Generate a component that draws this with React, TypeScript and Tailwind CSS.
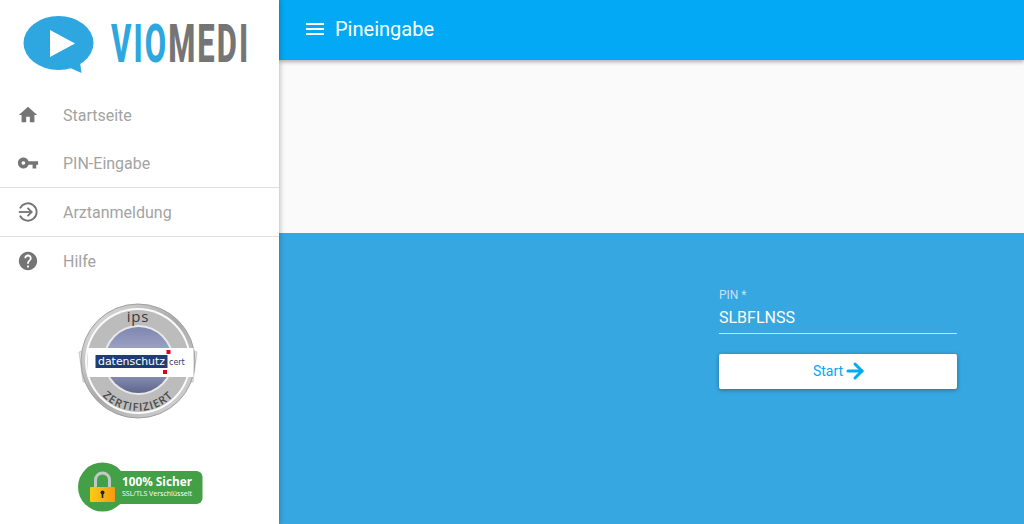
import React from 'react';
import { ArrowRight } from 'lucide-react';

const navTop = [
  {
    label: 'Startseite',
    icon: <path d="M10 20v-6h4v6h5v-8h3L12 3 2 12h3v8z" fill="currentColor" />,
  },
  {
    label: 'PIN-Eingabe',
    icon: (
      <path
        d="M12.65 10C11.83 7.67 9.61 6 7 6c-3.31 0-6 2.69-6 6s2.69 6 6 6c2.61 0 4.83-1.67 5.65-4H17v4h4v-4h2v-4H12.65zM7 14c-1.1 0-2-.9-2-2s.9-2 2-2 2 .9 2 2-.9 2-2 2z"
        fill="currentColor"
      />
    ),
  },
];

const NavItem: React.FC<{ label: string; icon: React.ReactNode }> = ({ label, icon }) => (
  <div className="flex h-12 items-center gap-6 pl-[17px]">
    <svg viewBox="0 0 24 24" className="h-[22px] w-[22px] text-[#757575]">
      {icon}
    </svg>
    <span className="mt-[2px] text-base text-[#a3a3a3]">{label}</span>
  </div>
);

const Logo = () => (
  <svg viewBox="0 0 279 91" className="h-[91px] w-[279px]">
    <ellipse cx="58.500" cy="43" rx="35" ry="27" fill="#2ea7e0" />
    <path d="M68 67L80 62L81.500 73z" fill="#2ea7e0" />
    <path d="M50 30l25 13.500L50 57z" fill="#fff" />
    <text transform="translate(111 62) scale(0.585 1)" fontSize="53" fontWeight="800" letterSpacing="3.500">
      <tspan fill="#2ea7e0">VIO</tspan>
      <tspan fill="#757575">MEDI</tspan>
    </text>
  </svg>
);

// ips datenschutz cert seal
const Seal = () => (
  <svg viewBox="0 0 124 118" className="h-[118px] w-[124px]">
    <defs>
      <linearGradient id="ring" x1="0" y1="0" x2="1" y2="1">
        <stop offset="0" stopColor="#e4e4e4" />
        <stop offset="0.5" stopColor="#a9a9a9" />
        <stop offset="1" stopColor="#dcdcdc" />
      </linearGradient>
      <linearGradient id="inner" x1="0" y1="0" x2="0" y2="1">
        <stop offset="0" stopColor="#7f86b0" />
        <stop offset="0.5" stopColor="#aab0cc" />
        <stop offset="1" stopColor="#5f678f" />
      </linearGradient>
      <path id="bottomArc" d="M10 60a50 50 0 0 0 100 0" />
    </defs>
    <path d="M1 51l7-2v27l7 5H5z" fill="#e3e3e3" stroke="#b5b5b5" strokeWidth="0.6" />
    <path d="M119 51l-7-2v27l-7 5h10z" fill="#e3e3e3" stroke="#b5b5b5" strokeWidth="0.6" />
    <circle cx="60" cy="60" r="57" fill="url(#ring)" stroke="#a0a0a0" />
    <circle cx="60" cy="60" r="53" fill="#fafafa" />
    <circle cx="60" cy="60" r="51" fill="#bcbcbc" />
    <circle cx="60.500" cy="59" r="35" fill="#e8e8e8" />
    <circle cx="60.500" cy="59" r="33" fill="url(#inner)" />
    <text x="60" y="21" textAnchor="middle" fontSize="15" fontFamily="'Open Sans', sans-serif" fill="#3a3a3a" letterSpacing="0.8">
      ips
    </text>
    <text fontSize="11" fontFamily="'Open Sans', sans-serif" fontWeight="600" fill="#4a4a4a" letterSpacing="1">
      <textPath href="#bottomArc" startOffset="50%" textAnchor="middle">
        ZERTIFIZIERT
      </textPath>
    </text>
    <rect x="9.500" y="47" width="106" height="29" fill="#fff" />
    <rect x="17.500" y="54" width="72" height="13" fill="#1f3d73" />
    <text x="20" y="64" fontSize="10.500" fontFamily="'DejaVu Sans', sans-serif" fill="#fff" textLength="67" lengthAdjust="spacingAndGlyphs">
      datenschutz
    </text>
    <text x="91" y="63.500" fontSize="8" fontFamily="'DejaVu Sans', sans-serif" fill="#1f3d73">
      cert
    </text>
    <rect x="88.500" y="49" width="4" height="4" fill="#e2001a" />
    <rect x="85" y="69" width="4" height="4" fill="#e2001a" />
  </svg>
);

const SslBadge = () => (
  <svg viewBox="0 0 126 50" className="h-[50px] w-[126px]">
    <defs>
      <linearGradient id="lock" x1="0" y1="0" x2="1" y2="0">
        <stop offset="0" stopColor="#f6cd16" />
        <stop offset="1" stopColor="#f59a13" />
      </linearGradient>
    </defs>
    <rect x="24" y="9" width="100.500" height="33" rx="6" fill="#43a047" />
    <circle cx="24.500" cy="25" r="24.500" fill="#43a047" />
    <path d="M17.500 25v-7a7 7 0 0 1 14 0v7" fill="none" stroke="#c4c8c4" strokeWidth="3" />
    <rect x="12" y="25" width="25" height="15" rx="1" fill="url(#lock)" />
    <circle cx="24.500" cy="30.500" r="2" fill="#222" />
    <rect x="23.700" y="31" width="1.600" height="5" fill="#222" />
    <text x="44" y="24" fontSize="11.500" fontWeight="700" fontFamily="'Open Sans', sans-serif" fill="#fff" textLength="70" lengthAdjust="spacingAndGlyphs">
      100% Sicher
    </text>
    <text x="44" y="34" fontSize="6.800" fontFamily="'Open Sans', sans-serif" fill="#fff" textLength="70" lengthAdjust="spacingAndGlyphs">
      SSL/TLS Verschlüsselt
    </text>
  </svg>
);

export default function App() {
  return (
    <div className="flex h-[524px] w-[1024px] overflow-hidden bg-white font-['Roboto',sans-serif]">
      {/* Sidebar */}
      <aside className="relative z-20 flex w-[279px] shrink-0 flex-col bg-white shadow-[1px_0_5px_rgba(0,0,0,0.25)]">
        <Logo />
        {navTop.map((item) => (
          <NavItem key={item.label} label={item.label} icon={item.icon} />
        ))}
        <div className="border-t border-[#e0e0e0]">
          <NavItem
            label="Arztanmeldung"
            icon={
              <g fill="none" stroke="currentColor" strokeWidth="2">
                <path d="M3.300 8a9.500 9.500 0 1 1 0 8" />
                <path d="M2 12h13" />
                <path d="M11.500 7.500L16 12l-4.500 4.500" />
              </g>
            }
          />
        </div>
        <div className="border-t border-[#e0e0e0]">
          <NavItem
            label="Hilfe"
            icon={
              <path
                d="M12 2C6.480 2 2 6.480 2 12s4.480 10 10 10 10-4.480 10-10S17.520 2 12 2zm1 17h-2v-2h2v2zm2.070-7.750l-.9.920C13.450 12.900 13 13.500 13 15h-2v-.5c0-1.100.45-2.100 1.170-2.830l1.240-1.260c.37-.36.59-.86.59-1.410 0-1.100-.9-2-2-2s-2 .9-2 2H8c0-2.210 1.790-4 4-4s4 1.790 4 4c0 .88-.36 1.680-.93 2.250z"
                fill="currentColor"
              />
            }
          />
        </div>
        <div className="mt-4 flex justify-center">
          <Seal />
        </div>
        <div className="mt-[43px] flex justify-center pl-[2px]">
          <SslBadge />
        </div>
      </aside>

      {/* Main */}
      <main className="flex flex-1 flex-col">
        <header className="relative z-10 flex h-[60px] items-center gap-2 bg-[#03a9f4] pb-[2px] pl-6 text-white shadow-[0_2px_4px_rgba(0,0,0,0.3)]">
          <svg viewBox="0 0 24 24" className="h-6 w-6" fill="currentColor">
            <path d="M3 18h18v-2H3v2zm0-5h18v-2H3v2zm0-7v2h18V6H3z" />
          </svg>
          <span className="text-xl">Pineingabe</span>
        </header>
        <div className="h-[173px] bg-[#fafafa]" />
        <div className="flex flex-1 justify-end bg-[#36a7e0] pr-[67px] pt-[55px]">
          <div className="w-[238px]">
            <div className="text-xs leading-[14px] text-white/70">PIN *</div>
            <div className="mt-[1px] h-[31px] border-b border-white/70 text-base leading-[30px] text-white">
              SLBFLNSS
            </div>
            <button className="mt-5 flex h-[35px] w-full items-center justify-center rounded-[2px] bg-white pb-[1px] text-sm text-[#03a9f4] shadow-[0_1px_4px_rgba(0,0,0,0.35)]">
              Start
              <ArrowRight className="-mr-1 h-6 w-6" strokeWidth={3} />
            </button>
          </div>
        </div>
      </main>
    </div>
  );
}
